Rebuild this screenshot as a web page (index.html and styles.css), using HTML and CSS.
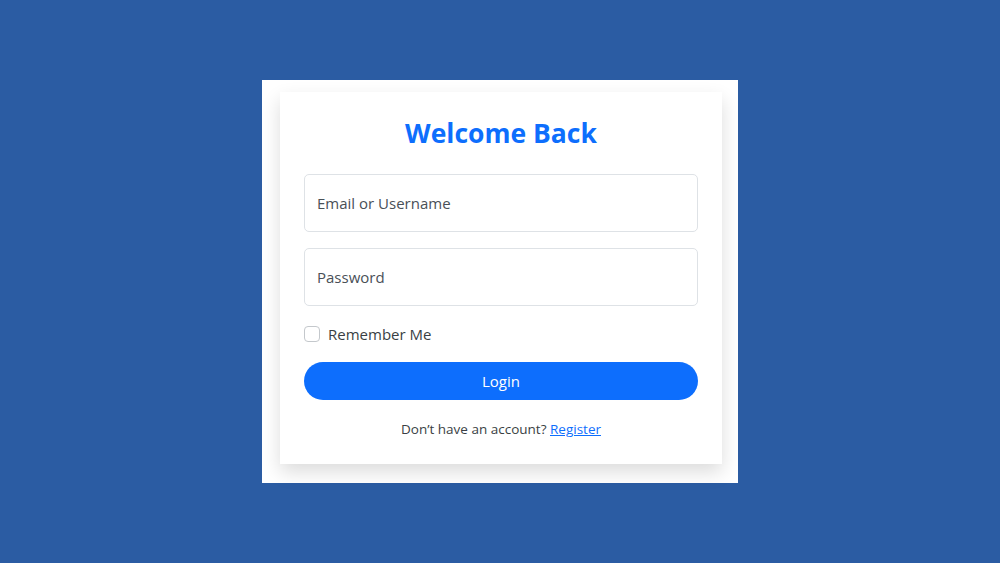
FILE: index.html
```html
<!DOCTYPE html>
<html lang="en">
<head>
    <meta charset="UTF-8">
    <meta name="viewport" content="width=device-width, initial-scale=1.0">
    <title>Login</title>
    <link rel="stylesheet" href="styles.css">
</head>
<body>

<div class="frame">
    <div class="login-card">
        <h1>Welcome Back</h1>
        <form class="login-form">
            <input type="text" class="field" placeholder="Email or Username">
            <input type="password" class="field" placeholder="Password">
            <label class="remember">
                <input type="checkbox">
                <span>Remember Me</span>
            </label>
            <button type="button">Login</button>
        </form>
        <p class="signup">Don’t have an account? <a href="#">Register</a></p>
    </div>
</div>

</body>
</html>
```

FILE: styles.css
```css
html, body {
    height: 100%;
}

body {
    margin: 0;
    font-family: "Open Sans", "Noto Sans", Arial, sans-serif;
    background-color: #2b5ca3;
    color: #212529;
    display: flex;
    align-items: center;
    justify-content: center;
}

.frame {
    width: 476px;
    box-sizing: border-box;
    padding: 12px 16px 19px 18px;
    background-color: #fff;
}

.login-card {
    background-color: #fff;
    padding: 22px 24px 26px;
    box-shadow: 0 8px 18px rgba(0, 0, 0, 0.14);
}

h1 {
    margin: 0 0 22px;
    text-align: center;
    color: #0d6efd;
    font-size: 26.5px;
    font-weight: 700;
    line-height: 38px;
}

.login-form {
    display: flex;
    flex-direction: column;
}

.field {
    height: 58px;
    box-sizing: border-box;
    padding: 0 12px;
    margin-bottom: 16px;
    font-family: inherit;
    font-size: 15px;
    color: #212529;
    border: 1px solid #dee2e6;
    border-radius: 5px;
    outline: none;
}

.field::placeholder {
    color: #495057;
}

.remember {
    display: flex;
    align-items: center;
    gap: 8px;
    font-size: 15px;
    color: #3a3f44;
    margin: 2px 0 18px;
}

.remember input {
    width: 16px;
    height: 16px;
    margin: 0;
    appearance: none;
    border: 1px solid #c4c8cc;
    border-radius: 4px;
    background: #fff;
}

button {
    height: 38px;
    background-color: #0d6efd;
    color: white;
    border: none;
    border-radius: 19px;
    font-family: inherit;
    font-size: 15px;
    cursor: pointer;
}

.signup {
    margin: 20px 0 0;
    text-align: center;
    font-size: 13.5px;
    color: #3a3f44;
}

.signup a {
    color: #0d6efd;
}
```
